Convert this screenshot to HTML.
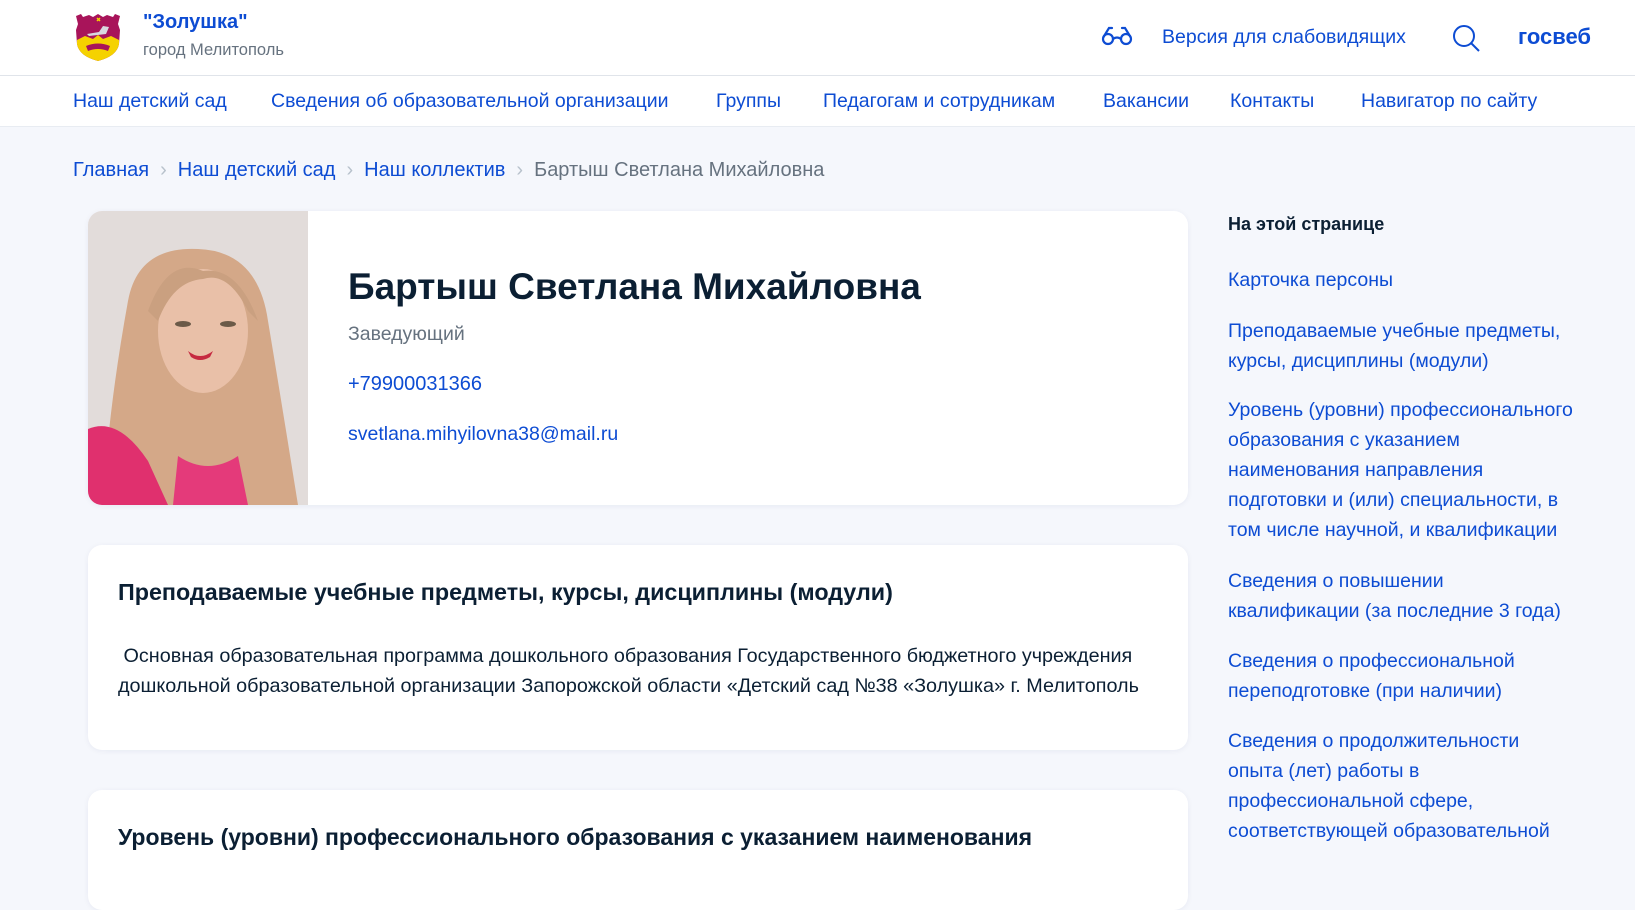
<!DOCTYPE html>
<html><head><meta charset="utf-8">
<style>
*{margin:0;padding:0;box-sizing:border-box}
body{width:1635px;height:856px;overflow:hidden;background:#f5f7fc;font-family:"Liberation Sans","DejaVu Sans",sans-serif;position:relative;color:#0b1f33}
.a{position:absolute;white-space:nowrap}
.blue{color:#0d4cd3}
header{position:absolute;left:0;top:0;width:1635px;height:127px;background:#fff;border-bottom:1px solid #e8ecf2}
.line{position:absolute;left:0;top:75px;width:1635px;height:1px;background:#e0e4ea}
.nav{font-size:19.5px;top:90px}
.card{position:absolute;left:88px;width:1100px;background:#fff;border-radius:14px;box-shadow:0 1px 6px rgba(0,40,100,0.06);overflow:hidden}
.side{font-size:19.5px;color:#0d4cd3;line-height:30px;left:1228px;width:349px;white-space:normal}
.sep{color:#b8c2cc;margin:0 11px}
</style></head><body>
<header>
<svg class="a" style="left:73px;top:12px" width="50" height="50" viewBox="0 0 50 50">
<path d="M3 4 L8 2 L10 5 L16 3 L20 5 L25 2 L30 5 L34 3 L40 5 L42 2 L47 4 L45 12 L47 18 L46 32 Q44 44 25 49 Q6 44 4 32 L3 18 L5 12 Z" fill="#a8145a"/>
<path d="M4 28 L12 24 L20 27 L25 23 L30 27 L38 24 L46 28 L46 32 Q44 44 25 49 Q6 44 4 32 Z" fill="#f5d200"/>
<path d="M13 34 Q25 29 37 34 L35 39 Q25 35 15 39 Z" fill="#a8145a"/>
<path d="M14 22 L26 20 L30 14 L36 15 L33 22 L16 24 Z" fill="#d8d8e0"/>
<path d="M24 6 l3 3 M27 6 l-3 3" stroke="#f5d200" stroke-width="1.5"/>
</svg>
<div class="a blue" style="left:143px;top:11px;font-size:20px;font-weight:bold">"Золушка"</div>
<div class="a" style="left:143px;top:41px;font-size:16.5px;color:#66727f">город Мелитополь</div>
<svg class="a" style="left:1100px;top:24px" width="34" height="24" viewBox="0 0 34 24">
<g fill="none" stroke="#0d4cd3" stroke-width="2.2" stroke-linecap="round">
<circle cx="8" cy="15" r="5"/><circle cx="26" cy="15" r="5"/>
<path d="M13 15 Q17 12 21 15"/><path d="M3.5 13 L9 4 L12 4"/><path d="M30.5 13 L25 4 L22 4"/>
</g></svg>
<div class="a blue" style="left:1162px;top:26px;font-size:19.5px">Версия для слабовидящих</div>
<svg class="a" style="left:1451px;top:24px" width="32" height="30" viewBox="0 0 32 30">
<g fill="none" stroke="#0d4cd3" stroke-width="2"><circle cx="13" cy="12" r="10"/><path d="M20.5 19.5 L28 27"/></g></svg>
<div class="a blue" style="left:1518px;top:24px;font-size:22px;font-weight:bold">госвеб</div>
<div class="line"></div>
<div class="a blue nav" style="left:73px">Наш детский сад</div>
<div class="a blue nav" style="left:271px">Сведения об образовательной организации</div>
<div class="a blue nav" style="left:716px">Группы</div>
<div class="a blue nav" style="left:823px">Педагогам и сотрудникам</div>
<div class="a blue nav" style="left:1103px">Вакансии</div>
<div class="a blue nav" style="left:1230px">Контакты</div>
<div class="a blue nav" style="left:1361px">Навигатор по сайту</div>
</header>

<div class="a" style="left:73px;top:159px;font-size:20px">
<span class="blue">Главная</span><span class="sep">›</span><span class="blue">Наш детский сад</span><span class="sep">›</span><span class="blue">Наш коллектив</span><span class="sep">›</span><span style="color:#66727f">Бартыш Светлана Михайловна</span>
</div>

<div class="card" style="top:211px;height:294px">
<svg class="a" style="left:0;top:0" width="220" height="294" viewBox="0 0 220 294">
<rect width="220" height="294" fill="#e2dcda"/>
<path d="M40 90 Q50 35 110 38 Q170 40 180 110 Q195 200 210 294 L15 294 Q20 200 40 90Z" fill="#d4a888"/>
<ellipse cx="115" cy="120" rx="45" ry="62" fill="#e9c0a8"/>
<path d="M60 100 Q80 45 115 60 Q150 55 170 110 L160 100 Q140 60 115 68 Q85 70 70 110Z" fill="#caa080"/>
<path d="M100 140 Q112 150 125 140 L122 146 Q112 152 103 146 Z" fill="#c62a40"/>
<ellipse cx="95" cy="113" rx="8" ry="3" fill="#6b5a48"/><ellipse cx="140" cy="113" rx="8" ry="3" fill="#6b5a48"/>
<path d="M0 218 Q30 205 60 250 L80 294 L0 294Z" fill="#e0306e"/>
<path d="M90 245 Q120 265 150 245 L160 294 L85 294Z" fill="#e43a7a"/>
</svg>
<div class="a" style="left:260px;top:55px;font-size:37px;font-weight:bold;color:#0b1f33">Бартыш Светлана Михайловна</div>
<div class="a" style="left:260px;top:112px;font-size:19.5px;color:#66727f">Заведующий</div>
<div class="a blue" style="left:260px;top:162px;font-size:20px">+79900031366</div>
<div class="a blue" style="left:260px;top:212px;font-size:19.5px">svetlana.mihyilovna38@mail.ru</div>
</div>

<div class="card" style="top:545px;height:205px">
<div class="a" style="left:30px;top:34px;font-size:23.3px;font-weight:bold">Преподаваемые учебные предметы, курсы, дисциплины (модули)</div>
<div class="a" style="left:30px;top:96px;font-size:19.8px;line-height:30px">&nbsp;Основная образовательная программа дошкольного образования Государственного бюджетного учреждения<br>дошкольной образовательной организации Запорожской области «Детский сад №38 «Золушка» г. Мелитополь</div>
</div>

<div class="card" style="top:790px;height:120px">
<div class="a" style="left:30px;top:34px;font-size:23px;font-weight:bold">Уровень (уровни) профессионального образования с указанием наименования</div>
</div>

<div class="a" style="left:1228px;top:214px;font-size:18px;font-weight:bold;color:#0b1f33">На этой странице</div>
<div class="a side" style="top:265px">Карточка персоны</div>
<div class="a side" style="top:316px">Преподаваемые учебные предметы, курсы, дисциплины (модули)</div>
<div class="a side" style="top:395px">Уровень (уровни) профессионального образования с указанием наименования направления подготовки и (или) специальности, в том числе научной, и квалификации</div>
<div class="a side" style="top:566px">Сведения о повышении квалификации (за последние 3 года)</div>
<div class="a side" style="top:646px">Сведения о профессиональной переподготовке (при наличии)</div>
<div class="a side" style="top:726px">Сведения о продолжительности опыта (лет) работы в профессиональной сфере, соответствующей образовательной</div>
</body></html>
